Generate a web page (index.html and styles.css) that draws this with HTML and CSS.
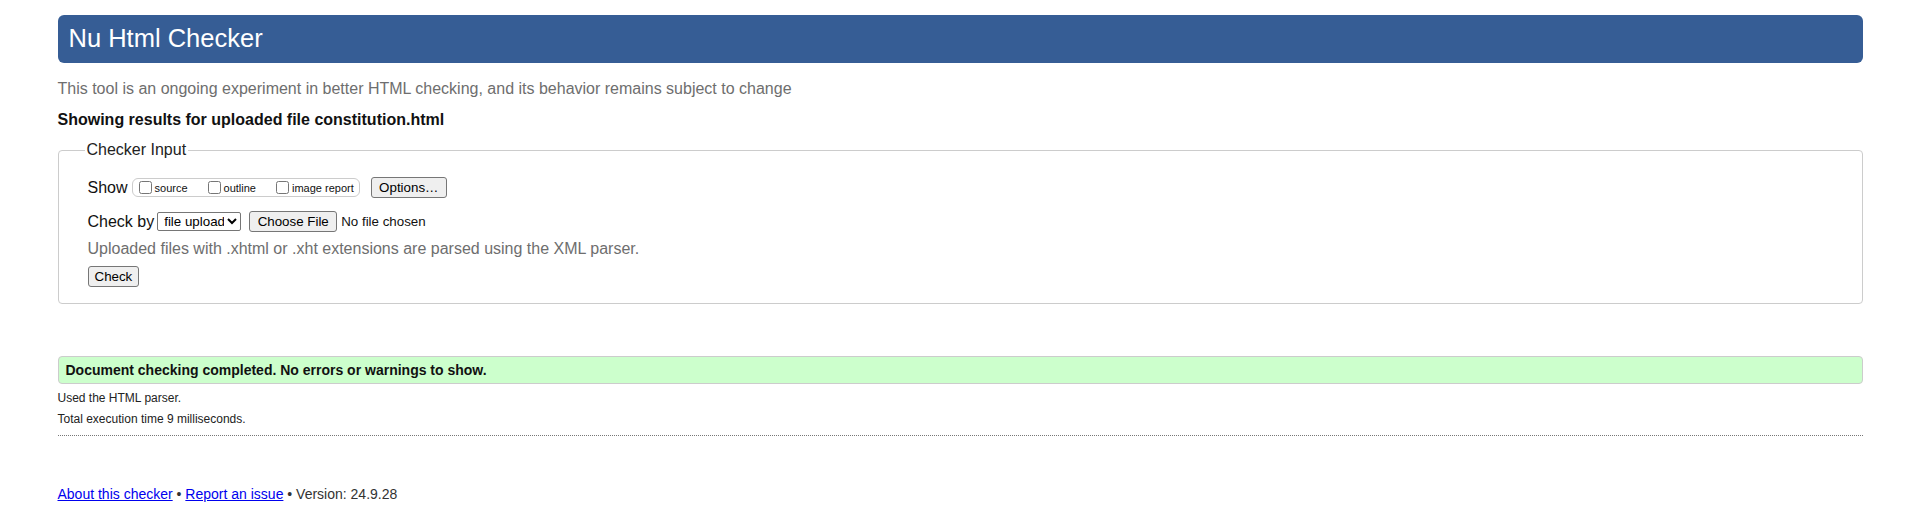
FILE: index.html
```html
<!DOCTYPE html>
<html lang="en">
<head>
<meta charset="utf-8">
<title>Showing results for constitution.html - Nu Html Checker</title>
<link rel="stylesheet" href="styles.css">
</head>
<body>
<h1 class="title">Nu Html Checker</h1>
<p class="lead">This tool is an ongoing experiment in better HTML checking, and its behavior remains subject to change</p>
<p class="showing">Showing results for uploaded file constitution.html</p>
<form class="form">
  <fieldset class="checker">
    <legend class="legend">Checker Input</legend>
    <div class="row">
      <span class="row-label">Show</span>
      <div class="opts">
        <label class="opt"><input type="checkbox" class="cb">source</label>
        <label class="opt"><input type="checkbox" class="cb">outline</label>
        <label class="opt"><input type="checkbox" class="cb">image report</label>
      </div>
      <button type="button" class="btn btn-options">Options…</button>
    </div>
    <div class="row row-by">
      <span class="row-label">Check by</span>
      <select class="sel"><option>file upload</option></select>
      <button type="button" class="btn btn-file">Choose File</button>
      <span class="nofile">No file chosen</span>
    </div>
    <p class="hint">Uploaded files with .xhtml or .xht extensions are parsed using the XML parser.</p>
    <div class="row row-submit">
      <button type="button" class="btn">Check</button>
    </div>
  </fieldset>
</form>
<p class="success">Document checking completed. No errors or warnings to show.</p>
<div class="details">
  <p class="detail">Used the HTML parser.</p>
  <p class="detail">Total execution time 9 milliseconds.</p>
</div>
<hr class="sep">
<p class="footer"><a href="#" class="link">About this checker</a> • <a href="#" class="link">Report an issue</a> • Version: 24.9.28</p>
</body>
</html>
```
FILE: styles.css
```css
html, body {
  margin: 0;
  background: #fff;
}
body {
  padding: 0 57.5px;
  font-family: "Liberation Sans", Arial, sans-serif;
  font-size: 16px;
  color: #111;
}
.title {
  margin: 15px 0 0;
  box-sizing: border-box;
  height: 48px;
  padding: 9px 11px 11px;
  line-height: 28px;
  font-size: 25.5px;
  font-weight: normal;
  color: #fff;
  background: #365d95;
  border-radius: 6px;
}
.lead {
  margin: 17px 0 0;
  line-height: 18px;
  color: #6e6e6e;
}
.showing {
  margin: 13px 0 0;
  line-height: 18px;
  font-weight: bold;
}
.form {
  margin: 0;
}
.checker {
  margin: 12px 0 0;
  padding: 18px 29px 16px;
  border: 1px solid #ccc;
  border-radius: 4px;
  min-width: 0;
}
.legend {
  padding: 0 2px;
  margin-left: -3px;
  line-height: 18px;
  color: #222;
}
.row {
  display: flex;
  align-items: center;
  height: 21px;
}
.row-label {
  line-height: 18px;
}
.opts {
  display: flex;
  align-items: center;
  box-sizing: border-box;
  height: 19px;
  margin-left: 4px;
  padding: 0 5px 0 2px;
  border: 1px solid #ccc;
  border-radius: 6px;
}
.opt {
  display: flex;
  align-items: center;
  font-size: 11px;
  line-height: 13px;
  padding-top: 2px;
}
.opt + .opt {
  margin-left: 16px;
}
.cb {
  width: 13px;
  height: 13px;
  margin: -2px 3px 0 4px;
}
.btn {
  box-sizing: border-box;
  height: 21px;
  padding: 0 6px;
  font-family: "Liberation Sans", Arial, sans-serif;
  font-size: 13.333px;
  color: #000;
  background: #efefef;
  border: 1px solid #767676;
  border-radius: 3px;
}
.btn-options {
  margin-left: 11px;
  width: 76px;
}
.row-by {
  margin-top: 13px;
}
.sel {
  box-sizing: border-box;
  height: 19px;
  width: 84px;
  margin-left: 3px;
  font-family: "Liberation Sans", Arial, sans-serif;
  font-size: 13.333px;
  color: #000;
  background: #fff;
  border: 1px solid #767676;
  border-radius: 2px;
  padding: 0 0 0 2px;
}
.btn-file {
  margin-left: 8px;
  width: 88px;
}
.nofile {
  margin-left: 4px;
  font-size: 13.333px;
}
.hint {
  margin: 8px 0 0;
  line-height: 18px;
  color: #6e6e6e;
}
.row-submit {
  margin-top: 8px;
}
.success {
  margin: 52px 0 0;
  padding: 5px 7px;
  line-height: 16px;
  font-size: 14px;
  font-weight: bold;
  background: #ccffcc;
  border: 1px solid #ccc;
  border-radius: 4px;
}
.details {
  margin-top: 4px;
}
.detail {
  margin: 0;
  font-size: 12px;
  line-height: 20.5px;
  color: #222;
}
.sep {
  margin: 6px 0 0;
  height: 0;
  border: 0;
  border-top: 1px dotted #777;
}
.footer {
  margin: 50px 0 0;
  font-size: 14px;
  line-height: 16px;
  color: #333;
}
.link {
  color: #00e;
}
```
